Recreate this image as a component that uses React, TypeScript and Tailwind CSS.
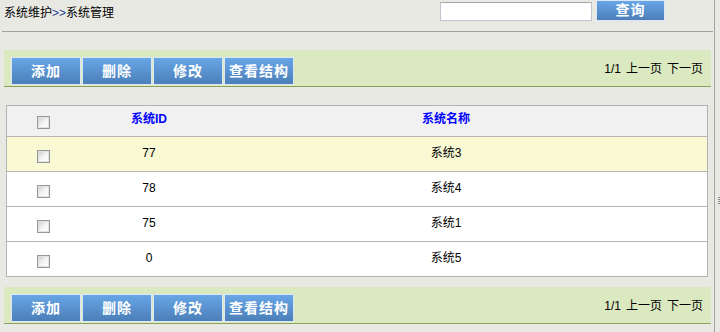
import { ReactNode } from 'react';

const rows = [
    { id: '77', name: '系统3', hl: true },
    { id: '78', name: '系统4', hl: false },
    { id: '75', name: '系统1', hl: false },
    { id: '0', name: '系统5', hl: false },
];

function BlueButton({ children, className = '' }: { children: ReactNode; className?: string }) {
    return (
        <button
            className={
                'flex items-center justify-center border border-[#dbe7f8] bg-gradient-to-b from-[#68a6e6] to-[#4b7fb9] text-[14px] font-bold tracking-[1px] text-white ' +
                className
            }
        >
            {children}
        </button>
    );
}

function CheckBox() {
    return (
        <span className="block h-[13px] w-[13px] border border-[#979797] bg-gradient-to-br from-[#c8c8c8] via-[#f4f4f4] to-[#ffffff] shadow-[inset_0_0_0_1px_#e2e2e2]" />
    );
}

function Toolbar() {
    return (
        <div className="ml-[4px] flex h-[37px] w-[707px] items-start justify-between border-b border-[#8ca25b] bg-[#dbe9c1] pl-[7px] pr-[8px]">
            <div className="mt-[7px] flex gap-[1px]">
                <BlueButton className="h-[28px] w-[70px]">添加</BlueButton>
                <BlueButton className="h-[28px] w-[70px]">删除</BlueButton>
                <BlueButton className="h-[28px] w-[70px]">修改</BlueButton>
                <BlueButton className="h-[28px] w-[70px]">查看结构</BlueButton>
            </div>
            <div className="mt-[10px] flex gap-[5px] text-[12px] text-black">
                <span>1/1</span>
                <span>上一页</span>
                <span>下一页</span>
            </div>
        </div>
    );
}

export default function App() {
    return (
        <div
            className="flex h-[332px] w-[720px] overflow-hidden bg-[#e9e9e4]"
            style={{ fontFamily: '"Liberation Sans", "Noto Sans CJK SC", sans-serif' }}
        >
            <div className="flex w-[714px] flex-col">
                <div className="flex h-[31px] items-start justify-between">
                    <div className="pl-[4px] pt-[4px] text-[12px] text-black">
                        系统维护<span className="text-[#1f3f8f]">&gt;&gt;</span>系统管理
                    </div>
                    <div className="mr-[49px] flex items-start gap-[4px]">
                        <input className="mt-[2px] h-[19px] w-[152px] border border-[#c3c3d0] border-t-[#a5a5a8] bg-white outline-none" />
                        <BlueButton className="h-[21px] w-[69px]">查询</BlueButton>
                    </div>
                </div>
                <div className="ml-[2px] h-px w-[711px] bg-[#a3a3a3]" />
                <div className="h-[18px]" />
                <Toolbar />
                <div className="ml-[6px] mt-[18px] w-[702px] border border-[#b3b3b3] bg-white text-[12px]">
                    <div className="grid h-[30px] grid-cols-[72px_140px_454px_1fr] items-center bg-[#f1f1f1] font-bold text-[#0000ff]">
                        <div className="flex justify-center pt-[2px]"><CheckBox /></div>
                        <div className="-mt-[4px] text-center">系统ID</div>
                        <div className="-mt-[4px] text-center">系统名称</div>
                        <div />
                    </div>
                    {rows.map((r) => (
                        <div
                            key={r.id}
                            className={
                                'grid h-[35px] grid-cols-[72px_140px_454px_1fr] items-center border-t border-[#b5b5b5] text-black ' +
                                (r.hl ? 'bg-[#f9f9d4]' : 'bg-white')
                            }
                        >
                            <div className="flex justify-center pt-[4px]"><CheckBox /></div>
                            <div className="-mt-[2px] text-center">{r.id}</div>
                            <div className="-mt-[2px] text-center">{r.name}</div>
                            <div />
                        </div>
                    ))}
                </div>
                <div className="h-[10px]" />
                <Toolbar />
            </div>
            <div className="relative w-[6px] border-l border-[#a3a3a3]">
                <div className="absolute left-[3px] top-[197px] flex flex-col gap-[1px]">
                    <span className="block h-[1px] w-[2px] bg-[#8a8a8a]" />
                    <span className="block h-[1px] w-[2px] bg-[#8a8a8a]" />
                    <span className="block h-[1px] w-[2px] bg-[#8a8a8a]" />
                    <span className="block h-[1px] w-[2px] bg-[#8a8a8a]" />
                </div>
            </div>
        </div>
    );
}
